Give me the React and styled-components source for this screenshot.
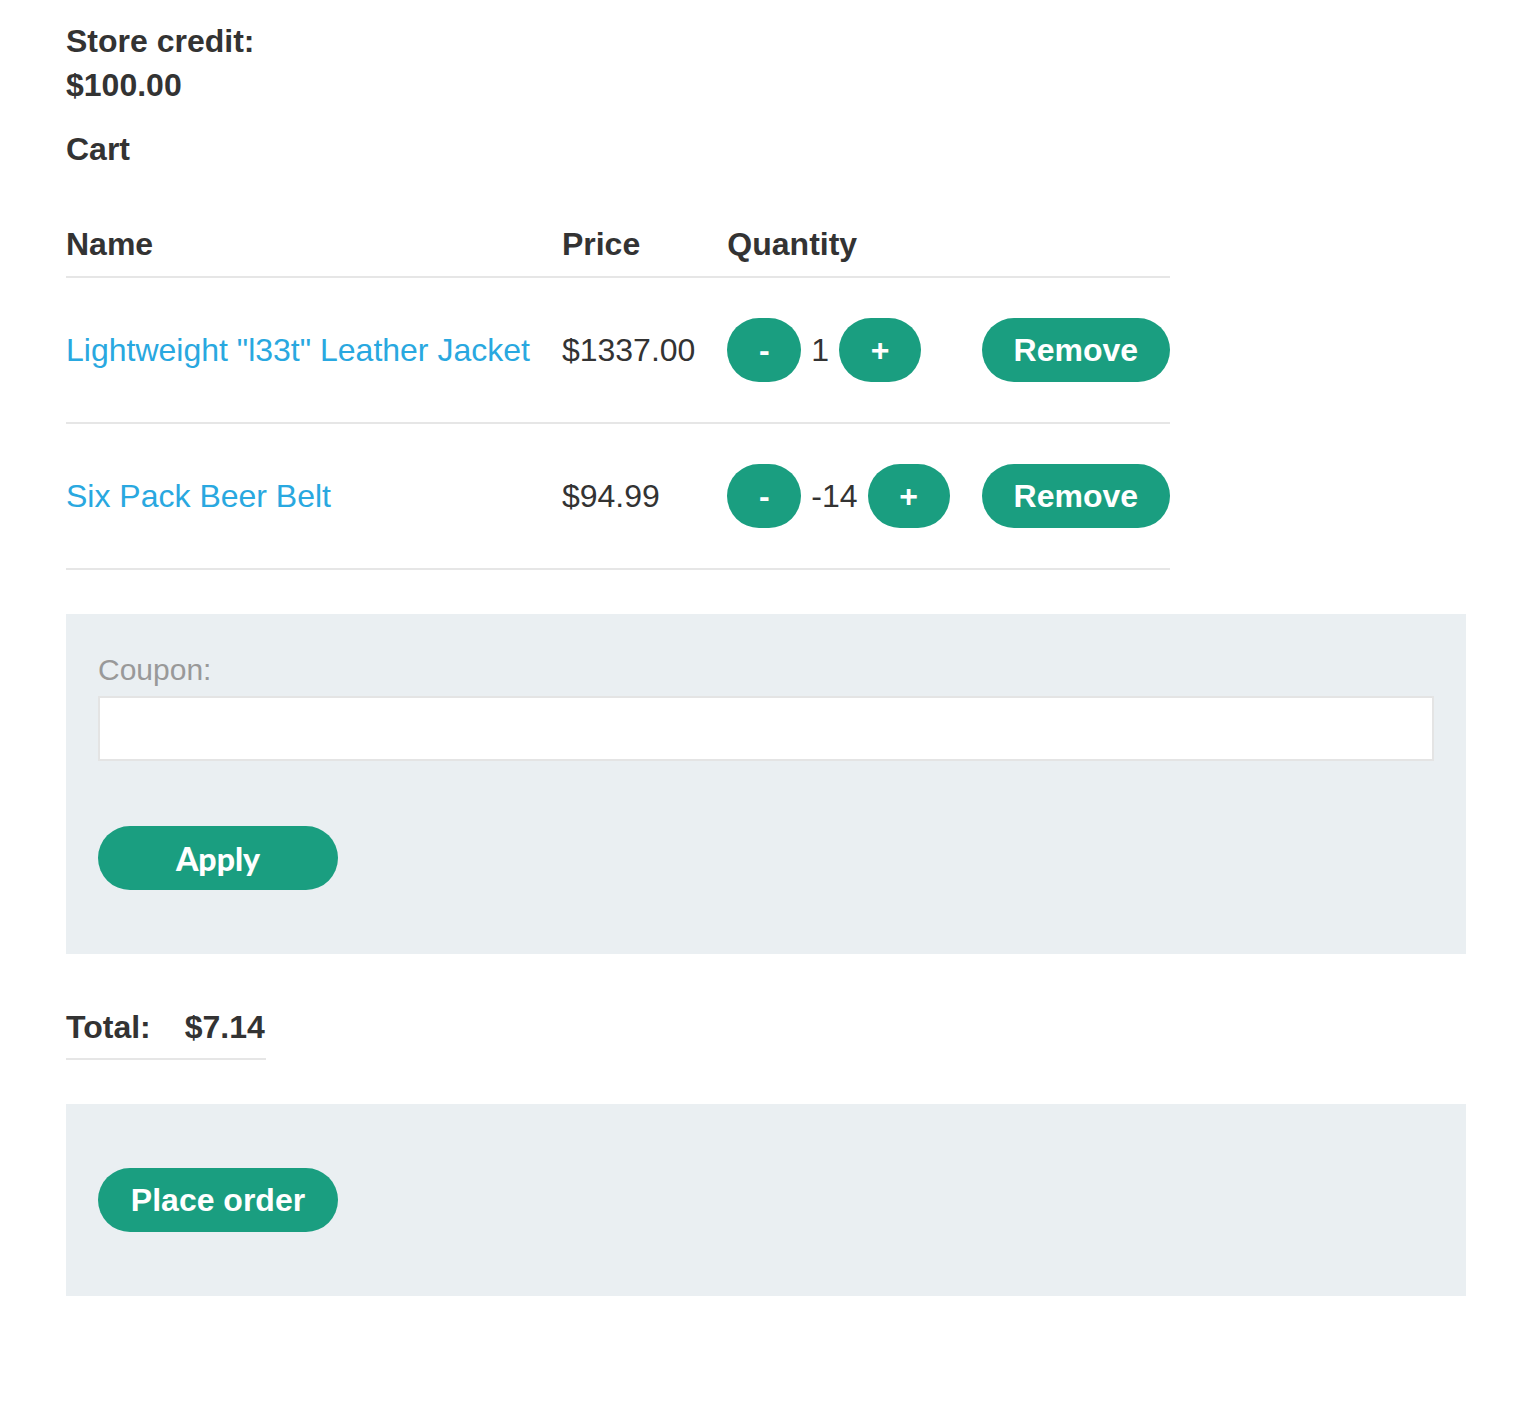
import React, { useState } from "react";
import styled, { createGlobalStyle } from "styled-components";

const GlobalStyle = createGlobalStyle`
  body {
    margin: 0;
    background: #fff;
    font-family: "Liberation Sans", Arial, sans-serif;
    color: #333;
  }
`;

const Page = styled.div`
  padding: 19px 66px 100px 66px;
  font-size: 32px;
`;

const Credit = styled.div`
  font-weight: bold;
  line-height: 44px;
`;

const Heading = styled.h2`
  font-size: 32px;
  font-weight: bold;
  margin: 20px 0 0 0;
  line-height: 44px;
`;

const Table = styled.table`
  border-collapse: collapse;
  margin-top: 41px;
`;

const Th = styled.th`
  text-align: left;
  font-weight: bold;
  height: 64px;
  padding: 0 32px 0 0;
  border-bottom: 2px solid #e6e6e6;
  vertical-align: middle;
  &:last-child {
    padding-right: 0;
  }
`;

const Td = styled.td`
  height: 144px;
  padding: 0 32px 0 0;
  border-bottom: 2px solid #e6e6e6;
  vertical-align: middle;
  white-space: nowrap;
  &:last-child {
    padding-right: 0;
  }
`;

const ProductLink = styled.a`
  color: #29a8e0;
  text-decoration: none;
`;

const Qty = styled.div`
  display: flex;
  align-items: center;
  gap: 10px;
`;

const Pill = styled.button`
  background: #1a9e80;
  color: #fff;
  border: none;
  border-radius: 32px;
  height: 64px;
  padding: 0 ${(p) => p.$pad || 32}px;
  font-family: "Liberation Sans", Arial, sans-serif;
  font-weight: bold;
  font-size: ${(p) => p.$size || 32}px;
  cursor: pointer;
  min-width: ${(p) => p.$min || 0}px;
`;

const Panel = styled.div`
  background: #eaeff2;
  padding: ${(p) => p.$pt || 32}px 32px 64px 32px;
  margin-top: ${(p) => p.$mt || 0}px;
`;

const Label = styled.label`
  display: block;
  color: #999;
  font-size: 30px;
  line-height: 40px;
  margin-bottom: 6px;
`;

const Input = styled.input`
  display: block;
  box-sizing: border-box;
  width: 100%;
  height: 65px;
  border: 2px solid #e4e4e4;
  background: #fff;
  font-size: 30px;
  padding: 0 12px;
  margin-bottom: 65px;
  outline: none;
`;

const ApplyButton = styled(Pill)`
  width: 240px;
  font-family: "Lato", "Open Sans", sans-serif;
  font-weight: 900;
`;

const TotalRow = styled.div`
  display: inline-flex;
  gap: 34px;
  font-weight: bold;
  margin-top: 55px;
  padding-bottom: 12px;
  border-bottom: 2px solid #e6e6e6;
  width: 200px;
  box-sizing: border-box;
`;

const items = [
  { name: 'Lightweight "l33t" Leather Jacket', price: "$1337.00", qty: 1 },
  { name: "Six Pack Beer Belt", price: "$94.99", qty: -14 },
];

export default function App() {
  const [coupon, setCoupon] = useState("");

  return (
    <>
      <GlobalStyle />
      <Page>
        <Credit>
          Store credit:
          <br />
          $100.00
        </Credit>
        <Heading>Cart</Heading>
        <Table>
          <thead>
            <tr>
              <Th>Name</Th>
              <Th>Price</Th>
              <Th>Quantity</Th>
              <Th />
            </tr>
          </thead>
          <tbody>
            {items.map((item) => (
              <tr key={item.name}>
                <Td>
                  <ProductLink href="#">{item.name}</ProductLink>
                </Td>
                <Td>{item.price}</Td>
                <Td>
                  <Qty>
                    <Pill $min={74} $pad={28}>-</Pill>
                    <span>{item.qty}</span>
                    <Pill $min={82} $pad={30}>+</Pill>
                  </Qty>
                </Td>
                <Td>
                  <Pill $min={188}>Remove</Pill>
                </Td>
              </tr>
            ))}
          </tbody>
        </Table>
        <Panel $mt={44} $pt={36}>
          <Label htmlFor="coupon">Coupon:</Label>
          <Input
            id="coupon"
            value={coupon}
            onChange={(e) => setCoupon(e.target.value)}
          />
          <ApplyButton>Apply</ApplyButton>
        </Panel>
        <TotalRow>
          <span>Total:</span>
          <span>$7.14</span>
        </TotalRow>
        <Panel $mt={44} $pt={64}>
          <Pill $min={240}>Place order</Pill>
        </Panel>
      </Page>
    </>
  );
}
